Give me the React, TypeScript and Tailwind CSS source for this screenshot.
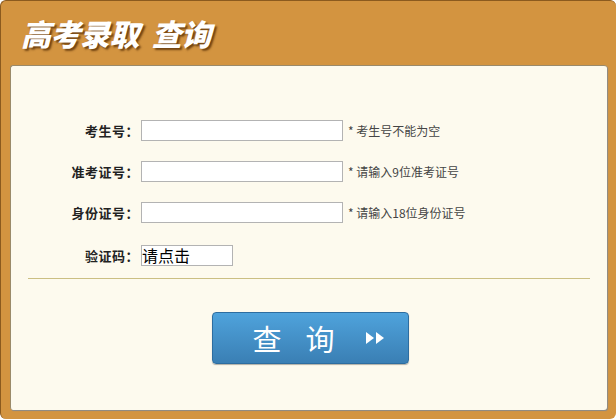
import React from 'react';

const rows = [
  { label: '考生号：', hint: '* 考生号不能为空' },
  { label: '准考证号：', hint: '* 请输入9位准考证号' },
  { label: '身份证号：', hint: '* 请输入18位身份证号' },
];

export default function App() {
  return (
    <div className="w-[616px] h-[419px] bg-white font-['Noto_Sans_CJK_SC',sans-serif]">
      <div className="w-[616px] h-[419px] rounded-[6px] bg-[#d39440] border-t border-l border-[#8b5a1e] flex flex-col">
        <div className="h-[64px] pl-[20px] pt-[10px]">
          <h1 className="text-[30px] leading-[44px] font-black italic text-white [text-shadow:2px_2px_2px_rgba(80,40,0,0.75)] tracking-[-0.5px]">
            高考录取&nbsp;&nbsp;查询
          </h1>
        </div>
        <div className="ml-[9px] mr-[9px] h-[345px] rounded-[3px] bg-[#fdfaee] border-t border-l border-[#9a8a6a] shadow-[1px_1px_1px_#8a8a8a] flex flex-col">
          <div className="pt-[54px] flex flex-col gap-[20px]">
            {rows.map((r) => (
              <div key={r.label} className="flex items-center h-[21px]">
                <div className="w-[128px] text-right text-[13px] font-bold text-[#222] tracking-[0.5px]">{r.label}</div>
                <input className="ml-[2px] w-[202px] h-[21px] bg-white border border-[#b3b3b3] outline-none" />
                <span className="ml-[5px] text-[12px] text-[#444]">{r.hint}</span>
              </div>
            ))}
            <div className="flex items-center h-[21px] mt-[2px]">
              <div className="w-[128px] text-right text-[13px] font-bold text-[#222] tracking-[0.5px]">验证码：</div>
              <div className="ml-[2px] w-[92px] h-[21px] bg-white border border-[#b3b3b3] text-[16px] leading-[19px] text-black whitespace-nowrap">请点击</div>
            </div>
          </div>
          <div className="mt-[12px] mx-[17px] h-px bg-[#cbbf83]" />
          <div className="flex justify-center pt-[33px] pl-[3px]">
            <button className="w-[197px] h-[52px] rounded-[4px] border border-[#2d6da0] bg-gradient-to-b from-[#4fa3dc] to-[#3a7fb4] flex items-center justify-center text-white shadow-[0_1px_1px_rgba(0,0,0,0.3)]">
              <span className="text-[29px] leading-none tracking-[24px] ml-[18px]">查询</span>
              <svg width="22" height="14" viewBox="0 0 22 14" className="ml-[6px]">
                <path d="M1 1 L9 7 L1 13 Z" fill="white" />
                <path d="M11 1 L19 7 L11 13 Z" fill="white" />
              </svg>
            </button>
          </div>
        </div>
      </div>
    </div>
  );
}
